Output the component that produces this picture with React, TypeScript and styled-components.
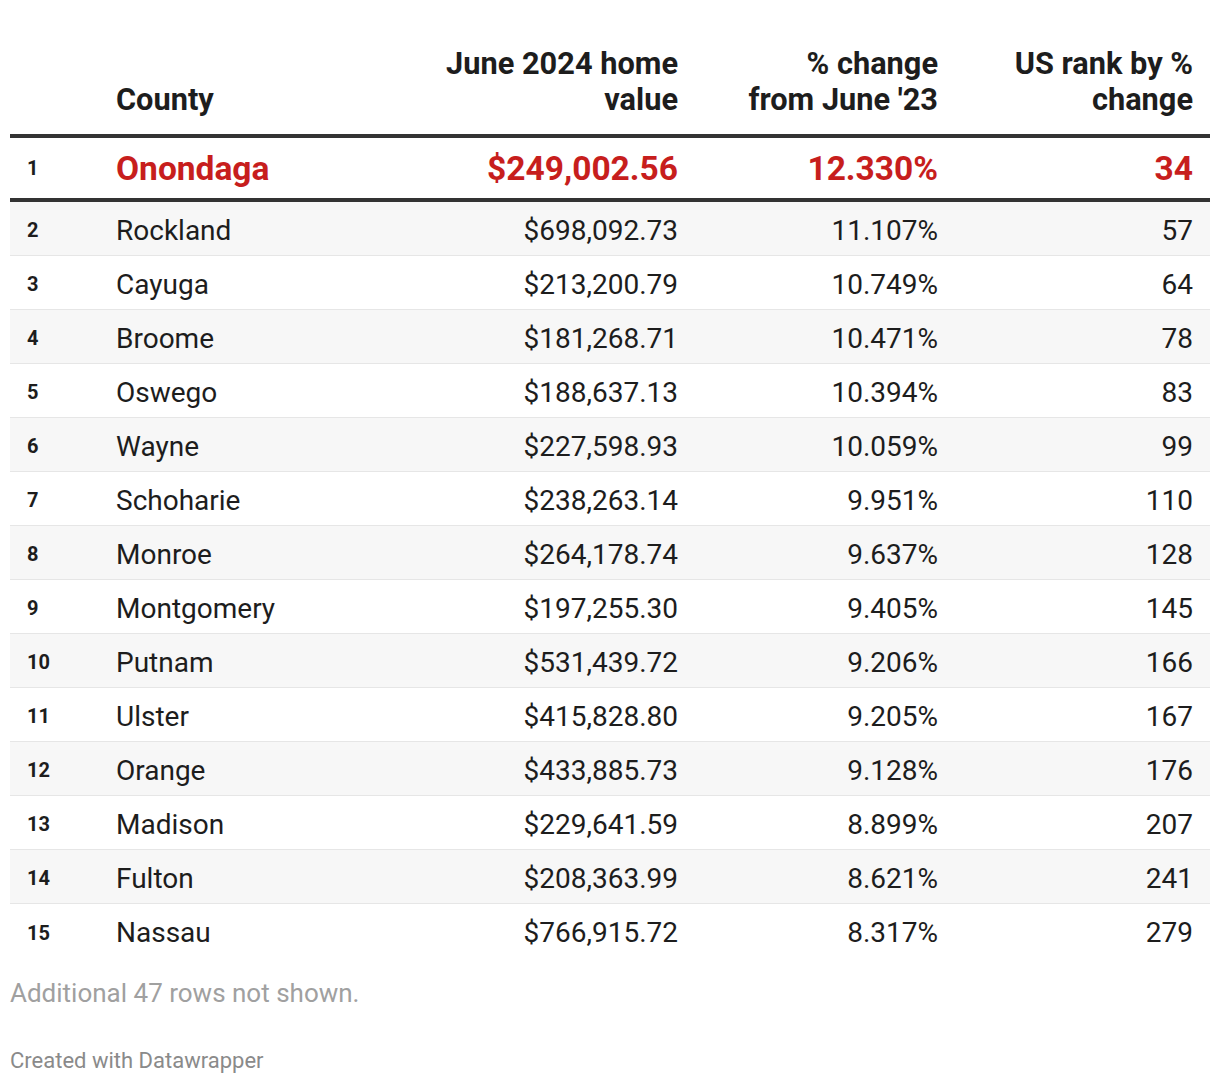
import React from "react";
import styled, { createGlobalStyle, css } from "styled-components";

const Global = createGlobalStyle`
  html, body { margin: 0; padding: 0; background: #ffffff; }
  body { font-family: Roboto, "Liberation Sans", Arial, sans-serif; color: #1d1d1d; }
`;

const Page = styled.div`
  padding: 46px 10px 0 10px;
  width: 1200px;
`;

const Grid = `
  display: grid;
  grid-template-columns: 106px 284px 278px 260px 272px;
`;

const HeaderRow = styled.div`
  ${Grid};
  align-items: end;
  padding-bottom: 16px;
  border-bottom: 4px solid #333333;
`;

const HeadCell = styled.div<{ $right?: boolean; $pr?: number }>`
  font-size: 30.75px;
  font-weight: 700;
  line-height: 36px;
  color: #1d1d1d;
  text-align: ${(p) => (p.$right ? "right" : "left")};
  padding-right: ${(p) => p.$pr ?? 0}px;
`;

const Row = styled.div<{ $top?: boolean; $shade?: boolean }>`
  ${Grid};
  align-items: center;
  box-sizing: border-box;
  ${(p) =>
    p.$top
      ? css`
          height: 64px;
          border-bottom: 4px solid #333333;
          background: #ffffff;
        `
      : css`
          height: 54px;
          padding-top: 3px;
          border-bottom: 1px solid #e6e6e6;
          background: ${p.$shade ? "#f7f7f7" : "#ffffff"};
        `}
  &:last-child {
    border-bottom: none;
  }
`;

const RankCell = styled.div`
  padding-left: 17px;
  font-size: 20px;
  font-weight: 700;
  color: #1d1d1d;
`;

const Cell = styled.div<{ $right?: boolean; $pr?: number; $top?: boolean }>`
  font-size: ${(p) => (p.$top ? 33.5 : 28)}px;
  font-weight: ${(p) => (p.$top ? 700 : 400)};
  color: ${(p) => (p.$top ? "#c71e1d" : "#1d1d1d")};
  text-align: ${(p) => (p.$right ? "right" : "left")};
  padding-right: ${(p) => p.$pr ?? 0}px;
  white-space: nowrap;
`;

const Note = styled.div`
  margin-top: 20px;
  font-size: 26px;
  color: #a0a0a0;
  line-height: 30px;
`;

const Credit = styled.div`
  margin-top: 40px;
  font-size: 22px;
  color: #8a8a8a;
  line-height: 26px;
`;

const rows: [string, string, string, string][] = [
  ["Onondaga", "$249,002.56", "12.330%", "34"],
  ["Rockland", "$698,092.73", "11.107%", "57"],
  ["Cayuga", "$213,200.79", "10.749%", "64"],
  ["Broome", "$181,268.71", "10.471%", "78"],
  ["Oswego", "$188,637.13", "10.394%", "83"],
  ["Wayne", "$227,598.93", "10.059%", "99"],
  ["Schoharie", "$238,263.14", "9.951%", "110"],
  ["Monroe", "$264,178.74", "9.637%", "128"],
  ["Montgomery", "$197,255.30", "9.405%", "145"],
  ["Putnam", "$531,439.72", "9.206%", "166"],
  ["Ulster", "$415,828.80", "9.205%", "167"],
  ["Orange", "$433,885.73", "9.128%", "176"],
  ["Madison", "$229,641.59", "8.899%", "207"],
  ["Fulton", "$208,363.99", "8.621%", "241"],
  ["Nassau", "$766,915.72", "8.317%", "279"],
];

export default function App() {
  return (
    <Page>
      <Global />
      <HeaderRow>
        <HeadCell />
        <HeadCell>County</HeadCell>
        <HeadCell $right>
          June 2024 home
          <br />
          value
        </HeadCell>
        <HeadCell $right>
          % change
          <br />
          from June '23
        </HeadCell>
        <HeadCell $right $pr={17}>
          US rank by %
          <br />
          change
        </HeadCell>
      </HeaderRow>
      <div>
        {rows.map((r, i) => {
          const top = i === 0;
          return (
            <Row key={r[0]} $top={top} $shade={i % 2 === 1}>
              <RankCell>{i + 1}</RankCell>
              <Cell $top={top}>{r[0]}</Cell>
              <Cell $top={top} $right>
                {r[1]}
              </Cell>
              <Cell $top={top} $right>
                {r[2]}
              </Cell>
              <Cell $top={top} $right $pr={17}>
                {r[3]}
              </Cell>
            </Row>
          );
        })}
      </div>
      <Note>Additional 47 rows not shown.</Note>
      <Credit>Created with Datawrapper</Credit>
    </Page>
  );
}
